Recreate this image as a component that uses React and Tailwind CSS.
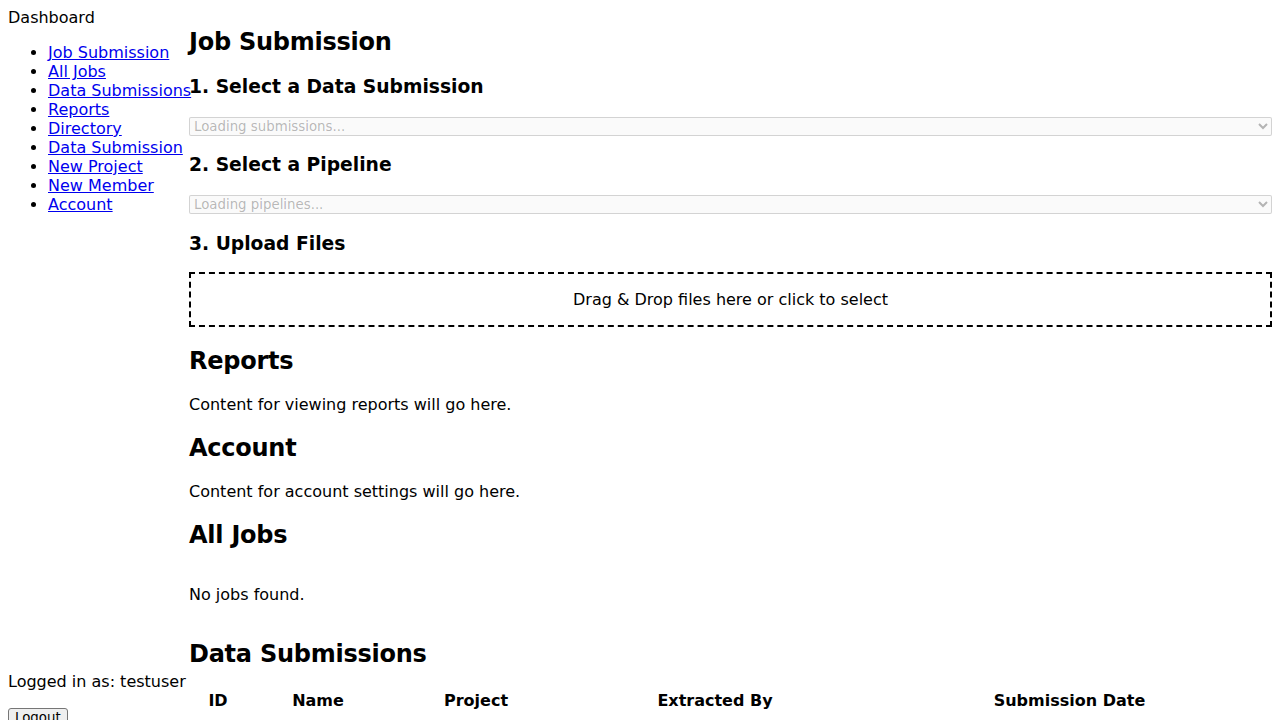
import React from "react";

const links = [
  "Job Submission",
  "All Jobs",
  "Data Submissions",
  "Reports",
  "Directory",
  "Data Submission",
  "New Project",
  "New Member",
  "Account",
];

const h2 = "text-[24px] leading-[28px] font-bold tracking-[-0.25px] my-[19.92px]";
const h3 = "text-[18.72px] leading-[22px] font-bold my-[18.72px]";
const sel =
  "block w-full h-[19px] text-[13.33px] leading-[16px] border border-[rgba(118,118,118,0.3)] rounded-[2px] bg-[rgba(239,239,239,0.3)] text-[rgba(16,16,16,0.3)]";

export default function App() {
  return (
    <div
      className="flex p-2 text-[16px] leading-[19px] text-black bg-white"
      style={{ fontFamily: '"DejaVu Sans", sans-serif' }}
    >
      <aside className="flex flex-col justify-between h-screen shrink-0 w-[181px]">
        <div>
          <div>Dashboard</div>
          <ul className="list-disc pl-10 my-4">
            {links.map((l) => (
              <li key={l} className="whitespace-nowrap">
                <a href="#" className="text-[#0000ee] underline">
                  {l}
                </a>
              </li>
            ))}
          </ul>
        </div>
        <div>
          <p className="my-4">Logged in as: testuser</p>
          <button className="border border-[#767676] rounded-[3px] bg-[#efefef] px-[6px] py-[1px] text-[13.33px] leading-[16px]">
            Logout
          </button>
        </div>
      </aside>
      <main className="flex-1 min-w-0">
        <h2 className={h2}>Job Submission</h2>
        <h3 className={h3}>1. Select a Data Submission</h3>
        <select disabled className={sel}>
          <option>Loading submissions...</option>
        </select>
        <h3 className={h3}>2. Select a Pipeline</h3>
        <select disabled className={sel}>
          <option>Loading pipelines...</option>
        </select>
        <h3 className="text-[18.72px] leading-[22px] font-bold mt-[18.72px] mb-[17.72px]">3. Upload Files</h3>
        <div className="border-2 border-dashed border-black p-4 text-center">
          Drag &amp; Drop files here or click to select
        </div>
        <h2 className={h2}>Reports</h2>
        <p className="my-4">Content for viewing reports will go here.</p>
        <h2 className={h2}>Account</h2>
        <p className="my-4">Content for account settings will go here.</p>
        <h2 className={h2}>All Jobs</h2>
        <div className="flow-root">
          <p className="my-4">No jobs found.</p>
        </div>
        <h2 className={h2}>Data Submissions</h2>
        <table className="w-full border-separate border-spacing-[2px]">
          <thead>
            <tr>
              <th className="w-[54px] p-[1px] font-bold text-center">ID</th>
              <th className="w-[142px] p-[1px] font-bold text-center">Name</th>
              <th className="w-[170px] p-[1px] font-bold text-center">Project</th>
              <th className="w-[304px] p-[1px] font-bold text-center">Extracted By</th>
              <th className="p-[1px] font-bold text-center">Submission Date</th>
            </tr>
          </thead>
          <tbody></tbody>
        </table>
      </main>
    </div>
  );
}
